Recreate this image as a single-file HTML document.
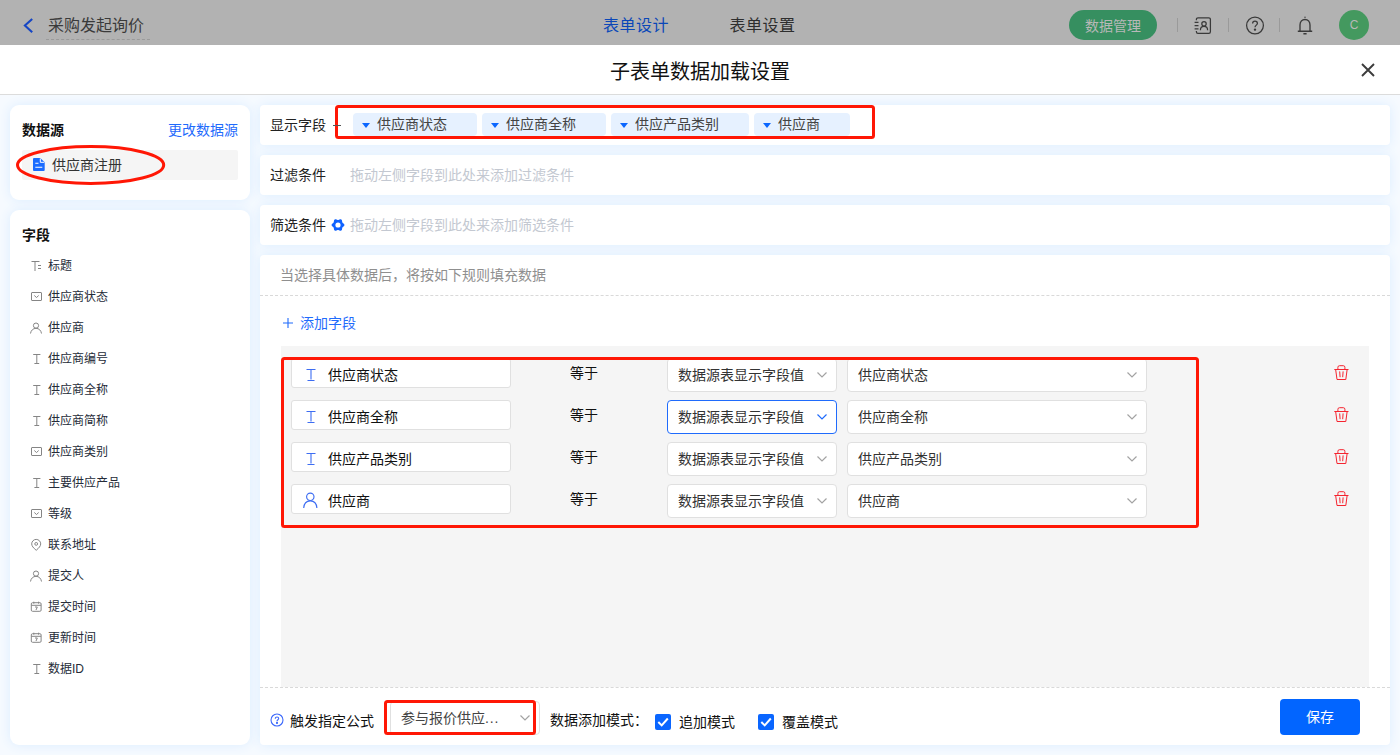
<!DOCTYPE html>
<html lang="zh-CN">
<head>
<meta charset="utf-8">
<title>子表单数据加载设置</title>
<style>
*{box-sizing:border-box;margin:0;padding:0}
html,body{width:1400px;height:755px;overflow:hidden}
body{font-family:"Liberation Sans","Noto Sans CJK SC",sans-serif;font-size:14px;color:#333;background:#f6faff;position:relative}
.abs{position:absolute}
svg{display:block;overflow:visible}
/* top bar */
#top{position:absolute;left:0;top:0;width:1400px;height:45px;background:#b2b2b2}
#top .t{position:absolute;top:1px;height:50px;line-height:50px;font-size:16px;white-space:nowrap}
#appname{left:48px;color:#3a3a3a}
#appline{position:absolute;left:46px;top:39px;width:104px;border-top:1px dashed #9a9a9a}
#tab1{left:603px;color:#0a47b8;letter-spacing:0.5px}
#tab2{left:729.5px;color:#2e2e2e;letter-spacing:0.5px}
#pill{position:absolute;left:1069px;top:10px;width:88px;height:30px;border-radius:15px;background:#368f60;color:#b8b8b8;font-size:14px;line-height:32px;text-align:center}
.sep{position:absolute;top:18px;width:1px;height:14px;background:#9a9a9a}
#avatar{position:absolute;left:1339px;top:10px;width:30px;height:30px;border-radius:50%;background:#44995f;color:#b8b8b8;font-size:12px;line-height:31px;text-align:center}
/* title bar */
#tbar{position:absolute;left:0;top:45px;width:1400px;height:50px;background:#fff;border-bottom:1px solid #dcdcdc}
#title{position:absolute;left:0;top:1px;width:1400px;height:52px;line-height:52px;text-align:center;font-size:20px;color:#111}
/* cards */
.card{position:absolute;background:#fff;box-shadow:0 0 12px #dbedff}
.lcard{left:10px;width:240px;border-radius:9px}
.rcard{left:260px;width:1130px;border-radius:4px}
.h{position:absolute;font-weight:bold;font-size:14px;color:#111;white-space:nowrap;line-height:20px}
.lab{position:absolute;font-size:14px;color:#222;white-space:nowrap;line-height:20px}
.ph{position:absolute;font-size:14px;color:#c3c8d1;white-space:nowrap;line-height:20px}
.blue{color:#1f6bfc}
/* field list */
.f{position:absolute;left:30px;height:20px;line-height:20px;font-size:12px;color:#252b38;white-space:nowrap}
.f svg{position:absolute;left:0;top:4px}
.f span{position:absolute;left:18px;top:0}
/* tags */
.tag{position:absolute;top:113px;height:23px;background:#e6f1ff;border-radius:4px;font-size:14px;line-height:23px;color:#444;white-space:nowrap}
.tag i{position:absolute;left:8.5px;top:10px;width:0;height:0;border-left:4.5px solid transparent;border-right:4.5px solid transparent;border-top:5px solid #0a66ff}
.tag span{position:absolute;left:24px;top:0}
/* rows */
#gray{position:absolute;left:281px;top:346px;width:1088px;height:341px;background:#f5f5f5}
.inp{position:absolute;left:291px;width:220px;height:30px;background:#fff;border:1px solid #e0e0e0;border-radius:3px;font-size:14px;line-height:28px;color:#111;white-space:nowrap}
.inp span{position:absolute;left:36px;top:2px}
.inp svg{position:absolute;left:13px;top:8px}
.eq{position:absolute;left:570px;font-size:14px;line-height:30px;height:30px;color:#111}
.sel{position:absolute;height:34px;background:#fff;border:1px solid #e0e0e0;border-radius:4px;font-size:14px;line-height:32px;color:#333;white-space:nowrap;padding-left:10px}
.sel svg{position:absolute;right:9.5px;top:13.3px}
.s1{left:667px;width:170px}
.s2{left:847px;width:300px}
.sel.act{border-color:#1f6bfc}
.del{position:absolute;left:1333.5px;margin-top:0}
.red{position:absolute;border:3px solid #ff1705;border-radius:3.5px}
/* bottom */
.cb{position:absolute;top:714px;width:16px;height:16px;background:#0a66ff;border-radius:2px}
#save{position:absolute;left:1280px;top:699px;width:80px;height:36px;background:#0265ff;border-radius:4px;color:#fff;font-size:14px;line-height:36px;text-align:center}
</style>
</head>
<body>
<!-- TOPBAR -->
<div id="top">
  <svg class="abs" style="left:22px;top:16px" width="12" height="18" viewBox="0 0 12 18"><path d="M10.2 2.9 L2.9 9.6 L10.2 16.3" fill="none" stroke="#1646c4" stroke-width="2.1"/></svg>
  <div class="t" id="appname">采购发起询价</div>
  <div id="appline"></div>
  <div class="t" id="tab1">表单设计</div>
  <div class="t" id="tab2">表单设置</div>
  <div id="pill">数据管理</div>
  <div class="sep" style="left:1177px"></div>
  <div class="sep" style="left:1228px"></div>
  <div class="sep" style="left:1279px"></div>
  <svg class="abs" style="left:1194px;top:17px" width="18" height="18" viewBox="0 0 18 18" fill="none" stroke="#3a3a3a" stroke-width="1.25"><path d="M2.400 3.300V2.400a1.600 1.600 0 0 1 1.600-1.600h10.800a1.600 1.600 0 0 1 1.600 1.600v12.400a1.600 1.600 0 0 1-1.600 1.600H4a1.600 1.600 0 0 1-1.600-1.600v-0.900"/><path d="M0.600 5.300h3.900M0.600 8.600h3.900M0.600 11.900h3.900"/><circle cx="10" cy="6.800" r="2.200"/><path d="M6.400 13.200c0-2.300 1.500-3.800 3.600-3.800s3.600 1.500 3.600 3.800"/></svg>
  <svg class="abs" style="left:1245px;top:16px" width="20" height="20" viewBox="0 0 20 20" fill="none" stroke="#3a3a3a" stroke-width="1.25"><circle cx="10" cy="9.5" r="8.4"/><path d="M7.6 7.6c0-1.4 1-2.4 2.4-2.4s2.4 0.9 2.4 2.2c0 1.6-2.4 1.9-2.4 3.9"/><circle cx="10" cy="13.6" r="0.6" fill="#333"/></svg>
  <svg class="abs" style="left:1296px;top:15px" width="18" height="20" viewBox="0 0 18 20" fill="none" stroke="#3a3a3a" stroke-width="1.35"><path d="M1.800 16.200h14.400M4 16V10c0-3.300 2.100-5.500 5-5.500s5 2.200 5 5.500v6M7.400 18.700h3.200"/><circle cx="9" cy="2.300" r="0.700" fill="#3a3a3a" stroke="none"/></svg>
  <div id="avatar">C</div>
</div>
<!-- TITLEBAR -->
<div id="tbar">
  <div id="title">子表单数据加载设置</div>
  <svg class="abs" style="left:1360.5px;top:18px" width="14" height="14" viewBox="0 0 14 14"><path d="M1 1L13 13M13 1L1 13" stroke="#3c3c3c" stroke-width="1.9" fill="none"/></svg>
</div>
<!-- LEFT -->
<div class="card lcard" style="top:105px;height:95px"></div>
<div class="card lcard" style="top:210px;height:535px"></div>
<div class="h" style="left:22px;top:120px">数据源</div>
<div class="lab blue" style="left:168px;top:120px">更改数据源</div>
<div class="abs" style="left:22px;top:150px;width:216px;height:30px;background:#f5f5f5;border-radius:2px"></div>
<svg class="abs" style="left:33.4px;top:158.1px" width="12" height="13" viewBox="0 0 12 13"><path d="M1 0h6.200l4.500 4.300V12a1 1 0 0 1-1 1H1A1 1 0 0 1 0 12V1A1 1 0 0 1 1 0z" fill="#1a6bff"/><path d="M7.300 0.500V4.300h4" fill="none" stroke="#fff" stroke-width="1"/><path d="M2.300 5.300h3.200M2.300 9.300h7" stroke="#fff" stroke-width="1.100"/></svg>
<div class="lab" style="left:52px;top:155px;color:#333">供应商注册</div>
<svg class="abs" style="left:14px;top:144px" width="154" height="42" viewBox="0 0 154 42"><ellipse cx="76.6" cy="21" rx="73.1" ry="18.4" fill="none" stroke="#ff1705" stroke-width="3"/></svg>
<div class="h" style="left:22px;top:225px">字段</div>
<div id="fields">
<div class="f" style="top:256px"><svg width="12" height="12" viewBox="0 0 12 12" fill="none" stroke="#858585" stroke-width="1"><path d="M1.500 1.500h8M5 1.500v9.500M8 5.500h3M8 8.500h3"/></svg><span>标题</span></div>
<div class="f" style="top:287px"><svg width="12" height="12" viewBox="0 0 12 12" fill="none" stroke="#858585" stroke-width="1"><rect x="1.5" y="1.5" width="10" height="8" rx="0.5"/><path d="M4.3 4.5l2.2 2 2.2-2"/></svg><span>供应商状态</span></div>
<div class="f" style="top:318px"><svg width="12" height="12" viewBox="0 0 12 12" fill="none" stroke="#858585" stroke-width="1"><circle cx="6" cy="3.600" r="2.600"/><path d="M0.500 11.500c0.400-3 2.600-5.200 5.500-5.200s5.100 2.200 5.500 5.200"/></svg><span>供应商</span></div>
<div class="f" style="top:349px"><svg width="12" height="12" viewBox="0 0 12 12" fill="none" stroke="#858585" stroke-width="1"><path d="M3.2 1.5h7.2M6.8 1.5v9M4.4 10.5h4.8"/></svg><span>供应商编号</span></div>
<div class="f" style="top:380px"><svg width="12" height="12" viewBox="0 0 12 12" fill="none" stroke="#858585" stroke-width="1"><path d="M3.2 1.5h7.2M6.8 1.5v9M4.4 10.5h4.8"/></svg><span>供应商全称</span></div>
<div class="f" style="top:411px"><svg width="12" height="12" viewBox="0 0 12 12" fill="none" stroke="#858585" stroke-width="1"><path d="M3.2 1.5h7.2M6.8 1.5v9M4.4 10.5h4.8"/></svg><span>供应商简称</span></div>
<div class="f" style="top:442px"><svg width="12" height="12" viewBox="0 0 12 12" fill="none" stroke="#858585" stroke-width="1"><rect x="1.5" y="1.5" width="10" height="8" rx="0.5"/><path d="M4.3 4.5l2.2 2 2.2-2"/></svg><span>供应商类别</span></div>
<div class="f" style="top:473px"><svg width="12" height="12" viewBox="0 0 12 12" fill="none" stroke="#858585" stroke-width="1"><path d="M3.2 1.5h7.2M6.8 1.5v9M4.4 10.5h4.8"/></svg><span>主要供应产品</span></div>
<div class="f" style="top:504px"><svg width="12" height="12" viewBox="0 0 12 12" fill="none" stroke="#858585" stroke-width="1"><rect x="1.5" y="1.5" width="10" height="8" rx="0.5"/><path d="M4.3 4.5l2.2 2 2.2-2"/></svg><span>等级</span></div>
<div class="f" style="top:535px"><svg width="12" height="12" viewBox="0 0 12 12" fill="none" stroke="#858585" stroke-width="1"><path d="M6.2 11.3C3.4 8.900 1.7 7 1.7 4.900A4.500 4.500 0 0 1 10.700 4.900c0 2.100-1.700 4-4.500 6.400z"/><circle cx="6.200" cy="4.900" r="1.400"/></svg><span>联系地址</span></div>
<div class="f" style="top:566px"><svg width="12" height="12" viewBox="0 0 12 12" fill="none" stroke="#858585" stroke-width="1"><circle cx="6" cy="3.600" r="2.600"/><path d="M0.500 11.500c0.400-3 2.600-5.200 5.500-5.200s5.100 2.200 5.500 5.200"/></svg><span>提交人</span></div>
<div class="f" style="top:597px"><svg width="12" height="12" viewBox="0 0 12 12" fill="none" stroke="#858585" stroke-width="1"><rect x="1.3" y="1.7" width="9.8" height="8.6" rx="1.2"/><path d="M1.3 4.3h9.800M3.800 0.700v2M8.600 0.700v2M5 6.000h2.300l-1.300 3"/></svg><span>提交时间</span></div>
<div class="f" style="top:628px"><svg width="12" height="12" viewBox="0 0 12 12" fill="none" stroke="#858585" stroke-width="1"><rect x="1.3" y="1.7" width="9.8" height="8.6" rx="1.2"/><path d="M1.3 4.3h9.800M3.800 0.700v2M8.600 0.700v2M5 6.000h2.300l-1.300 3"/></svg><span>更新时间</span></div>
<div class="f" style="top:659px"><svg width="12" height="12" viewBox="0 0 12 12" fill="none" stroke="#858585" stroke-width="1"><path d="M3.2 1.5h7.2M6.8 1.5v9M4.4 10.5h4.8"/></svg><span>数据ID</span></div>
</div>
<!-- RIGHT CARDS -->
<div class="card rcard" style="top:105px;height:40px"></div>
<div class="card rcard" style="top:155px;height:40px"></div>
<div class="card rcard" style="top:205px;height:40px"></div>
<div class="card rcard" style="top:255px;height:490px"></div>
<div class="lab" style="left:270px;top:115px">显示字段</div>
<div class="tag" style="left:353px;width:124px"><i></i><span>供应商状态</span></div>
<div class="tag" style="left:482px;width:124px"><i></i><span>供应商全称</span></div>
<div class="tag" style="left:611px;width:138px"><i></i><span>供应产品类别</span></div>
<div class="tag" style="left:754px;width:96px"><i></i><span>供应商</span></div>
<div class="red" style="left:335px;top:105px;width:540px;height:34px"></div>
<div class="abs" style="left:333px;top:125px;width:8px;height:1px;background:#555"></div>
<div class="lab" style="left:270px;top:165px">过滤条件</div>
<div class="ph" style="left:350px;top:165px">拖动左侧字段到此处来添加过滤条件</div>
<div class="lab" style="left:270px;top:215px">筛选条件</div>
<svg class="abs" style="left:330.5px;top:218.2px" width="14" height="14" viewBox="0 0 14 14"><path d="M13.45 7.00L13.33 7.55L13.01 8.06L12.55 8.49L12.07 8.85L11.66 9.17L11.37 9.52L11.21 9.95L11.14 10.47L11.07 11.07L10.92 11.67L10.65 12.21L10.23 12.59L9.69 12.76L9.09 12.73L8.49 12.55L7.94 12.32L7.45 12.12L7.00 12.05L6.55 12.12L6.06 12.32L5.51 12.55L4.91 12.73L4.31 12.76L3.78 12.59L3.35 12.21L3.08 11.67L2.93 11.07L2.86 10.47L2.79 9.95L2.63 9.53L2.34 9.17L1.93 8.85L1.45 8.49L0.99 8.06L0.67 7.55L0.55 7.00L0.67 6.45L0.99 5.94L1.45 5.51L1.93 5.15L2.34 4.83L2.63 4.47L2.79 4.05L2.86 3.53L2.93 2.93L3.08 2.33L3.35 1.79L3.77 1.41L4.31 1.24L4.91 1.27L5.51 1.45L6.06 1.68L6.55 1.88L7.00 1.95L7.45 1.88L7.94 1.68L8.49 1.45L9.09 1.27L9.69 1.24L10.22 1.41L10.65 1.79L10.92 2.33L11.07 2.93L11.14 3.53L11.21 4.05L11.37 4.48L11.66 4.83L12.07 5.15L12.55 5.51L13.01 5.94L13.33 6.45Z" fill="#0f62ff"/><circle cx="7" cy="7" r="2.6" fill="#fff"/></svg>
<div class="ph" style="left:350px;top:215px">拖动左侧字段到此处来添加筛选条件</div>
<div class="lab" style="left:280px;top:265px;color:#8f8f8f">当选择具体数据后，将按如下规则填充数据</div>
<div class="abs" style="left:260px;top:295px;width:1130px;border-top:1px dashed #d9d9d9"></div>
<svg class="abs" style="left:283px;top:318px" width="10" height="10" viewBox="0 0 10 10"><path d="M5 0V10M0 5H10" stroke="#1f6bfc" stroke-width="1.100"/></svg>
<div class="lab blue" style="left:300px;top:313px">添加字段</div>
<div id="gray"></div>
<div id="rows">
<div class="inp" style="top:358px"><svg width="12" height="16" viewBox="0 0 12 16" fill="none" stroke="#3d6df2" stroke-width="1.100"><path d="M1.500 2.500h9M6 2.500v10M2.500 13.500h7"/></svg><span>供应商状态</span></div><div class="eq" style="top:358px">等于</div><div class="sel s1" style="top:358px">数据源表显示字段值<svg width="10" height="6" viewBox="0 0 10 6"><path d="M0.500 0.500L5 5L9.500 0.500" fill="none" stroke="#a3a3a3" stroke-width="1.200"/></svg></div><div class="sel s2" style="top:358px">供应商状态<svg width="10" height="6" viewBox="0 0 10 6"><path d="M0.500 0.500L5 5L9.500 0.500" fill="none" stroke="#a3a3a3" stroke-width="1.200"/></svg></div><div class="del" style="top:365px"><svg width="15" height="15" viewBox="0 0 15 15" fill="none" stroke="#f5242f" stroke-width="1"><path d="M0.3 4.5h14.2M1.7 4.8l1.3 9.7h8.8l1.3-9.7M3.900 4.300V2.300a1.600 1.600 0 0 1 1.600-1.600h3.800a1.600 1.600 0 0 1 1.600 1.600v2M5.700 6.400l0.400 5.800M9.100 6.400l-0.400 5.800"/></svg></div>
<div class="inp" style="top:400px"><svg width="12" height="16" viewBox="0 0 12 16" fill="none" stroke="#3d6df2" stroke-width="1.100"><path d="M1.500 2.500h9M6 2.500v10M2.500 13.500h7"/></svg><span>供应商全称</span></div><div class="eq" style="top:400px">等于</div><div class="sel s1 act" style="top:400px">数据源表显示字段值<svg width="10" height="6" viewBox="0 0 10 6"><path d="M0.500 0.500L5 5L9.500 0.500" fill="none" stroke="#1f6bfc" stroke-width="1.200"/></svg></div><div class="sel s2" style="top:400px">供应商全称<svg width="10" height="6" viewBox="0 0 10 6"><path d="M0.500 0.500L5 5L9.500 0.500" fill="none" stroke="#a3a3a3" stroke-width="1.200"/></svg></div><div class="del" style="top:407px"><svg width="15" height="15" viewBox="0 0 15 15" fill="none" stroke="#f5242f" stroke-width="1"><path d="M0.3 4.5h14.2M1.7 4.8l1.3 9.7h8.8l1.3-9.7M3.900 4.300V2.300a1.600 1.600 0 0 1 1.600-1.600h3.800a1.600 1.600 0 0 1 1.600 1.600v2M5.700 6.400l0.400 5.800M9.100 6.400l-0.400 5.800"/></svg></div>
<div class="inp" style="top:442px"><svg width="12" height="16" viewBox="0 0 12 16" fill="none" stroke="#3d6df2" stroke-width="1.100"><path d="M1.500 2.500h9M6 2.500v10M2.500 13.500h7"/></svg><span>供应产品类别</span></div><div class="eq" style="top:442px">等于</div><div class="sel s1" style="top:442px">数据源表显示字段值<svg width="10" height="6" viewBox="0 0 10 6"><path d="M0.500 0.500L5 5L9.500 0.500" fill="none" stroke="#a3a3a3" stroke-width="1.200"/></svg></div><div class="sel s2" style="top:442px">供应产品类别<svg width="10" height="6" viewBox="0 0 10 6"><path d="M0.500 0.500L5 5L9.500 0.500" fill="none" stroke="#a3a3a3" stroke-width="1.200"/></svg></div><div class="del" style="top:449px"><svg width="15" height="15" viewBox="0 0 15 15" fill="none" stroke="#f5242f" stroke-width="1"><path d="M0.3 4.5h14.2M1.7 4.8l1.3 9.7h8.8l1.3-9.7M3.900 4.300V2.300a1.600 1.600 0 0 1 1.600-1.600h3.800a1.600 1.600 0 0 1 1.600 1.600v2M5.700 6.400l0.400 5.800M9.100 6.400l-0.400 5.800"/></svg></div>
<div class="inp" style="top:484px"><svg style="left:11px;top:6.5px" width="15" height="17" viewBox="0 0 15 17" fill="none" stroke="#3d6df2" stroke-width="1.15"><circle cx="7.300" cy="4.800" r="3.700"/><path d="M0.700 16c0.300-4.400 2.900-7.200 6.600-7.200s6.300 2.800 6.600 7.200"/></svg><span>供应商</span></div><div class="eq" style="top:484px">等于</div><div class="sel s1" style="top:484px">数据源表显示字段值<svg width="10" height="6" viewBox="0 0 10 6"><path d="M0.500 0.500L5 5L9.500 0.500" fill="none" stroke="#a3a3a3" stroke-width="1.200"/></svg></div><div class="sel s2" style="top:484px">供应商<svg width="10" height="6" viewBox="0 0 10 6"><path d="M0.500 0.500L5 5L9.500 0.500" fill="none" stroke="#a3a3a3" stroke-width="1.200"/></svg></div><div class="del" style="top:491px"><svg width="15" height="15" viewBox="0 0 15 15" fill="none" stroke="#f5242f" stroke-width="1"><path d="M0.3 4.5h14.2M1.7 4.8l1.3 9.7h8.8l1.3-9.7M3.900 4.300V2.300a1.600 1.600 0 0 1 1.600-1.600h3.800a1.600 1.600 0 0 1 1.600 1.600v2M5.700 6.400l0.400 5.800M9.100 6.400l-0.400 5.800"/></svg></div>
</div>
<div class="red" style="left:281px;top:357px;width:918px;height:171px"></div>
<div class="abs" style="left:260px;top:687px;width:1130px;border-top:1px dashed #d9d9d9"></div>
<!-- BOTTOM -->
<svg class="abs" style="left:270.2px;top:712.6px" width="14" height="14" viewBox="0 0 14 14" fill="none" stroke="#3b68fb" stroke-width="1.1"><circle cx="7" cy="7" r="6"/><path d="M5.300 5.700c0-1 0.700-1.700 1.700-1.700s1.700 0.600 1.700 1.500c0 1.200-1.700 1.400-1.700 2.800"/><circle cx="7" cy="9.900" r="0.500" fill="#3b68fb"/></svg>
<div class="lab" style="left:290px;top:711px;color:#111">触发指定公式</div>
<div class="sel" style="left:390px;top:701px;width:150px;padding-left:10px;color:#444">参与报价供应<span style="letter-spacing:0.8px">...</span><svg width="10" height="6" viewBox="0 0 10 6"><path d="M0.500 0.500L5 5L9.500 0.500" fill="none" stroke="#a3a3a3" stroke-width="1.200"/></svg></div>
<div class="red" style="left:384px;top:700px;width:152px;height:35px"></div>
<div class="lab" style="left:550px;top:710px;color:#111">数据添加模式：</div>
<div class="cb" style="left:655px"><svg width="16" height="16" viewBox="0 0 16 16"><path d="M3.3 8L6.7 11.4L12.8 4.5" fill="none" stroke="#fff" stroke-width="2"/></svg></div>
<div class="lab" style="left:679px;top:712px;color:#111">追加模式</div>
<div class="cb" style="left:758px"><svg width="16" height="16" viewBox="0 0 16 16"><path d="M3.3 8L6.7 11.4L12.8 4.5" fill="none" stroke="#fff" stroke-width="2"/></svg></div>
<div class="lab" style="left:782px;top:712px;color:#111">覆盖模式</div>
<div id="save">保存</div>
</body>
</html>
